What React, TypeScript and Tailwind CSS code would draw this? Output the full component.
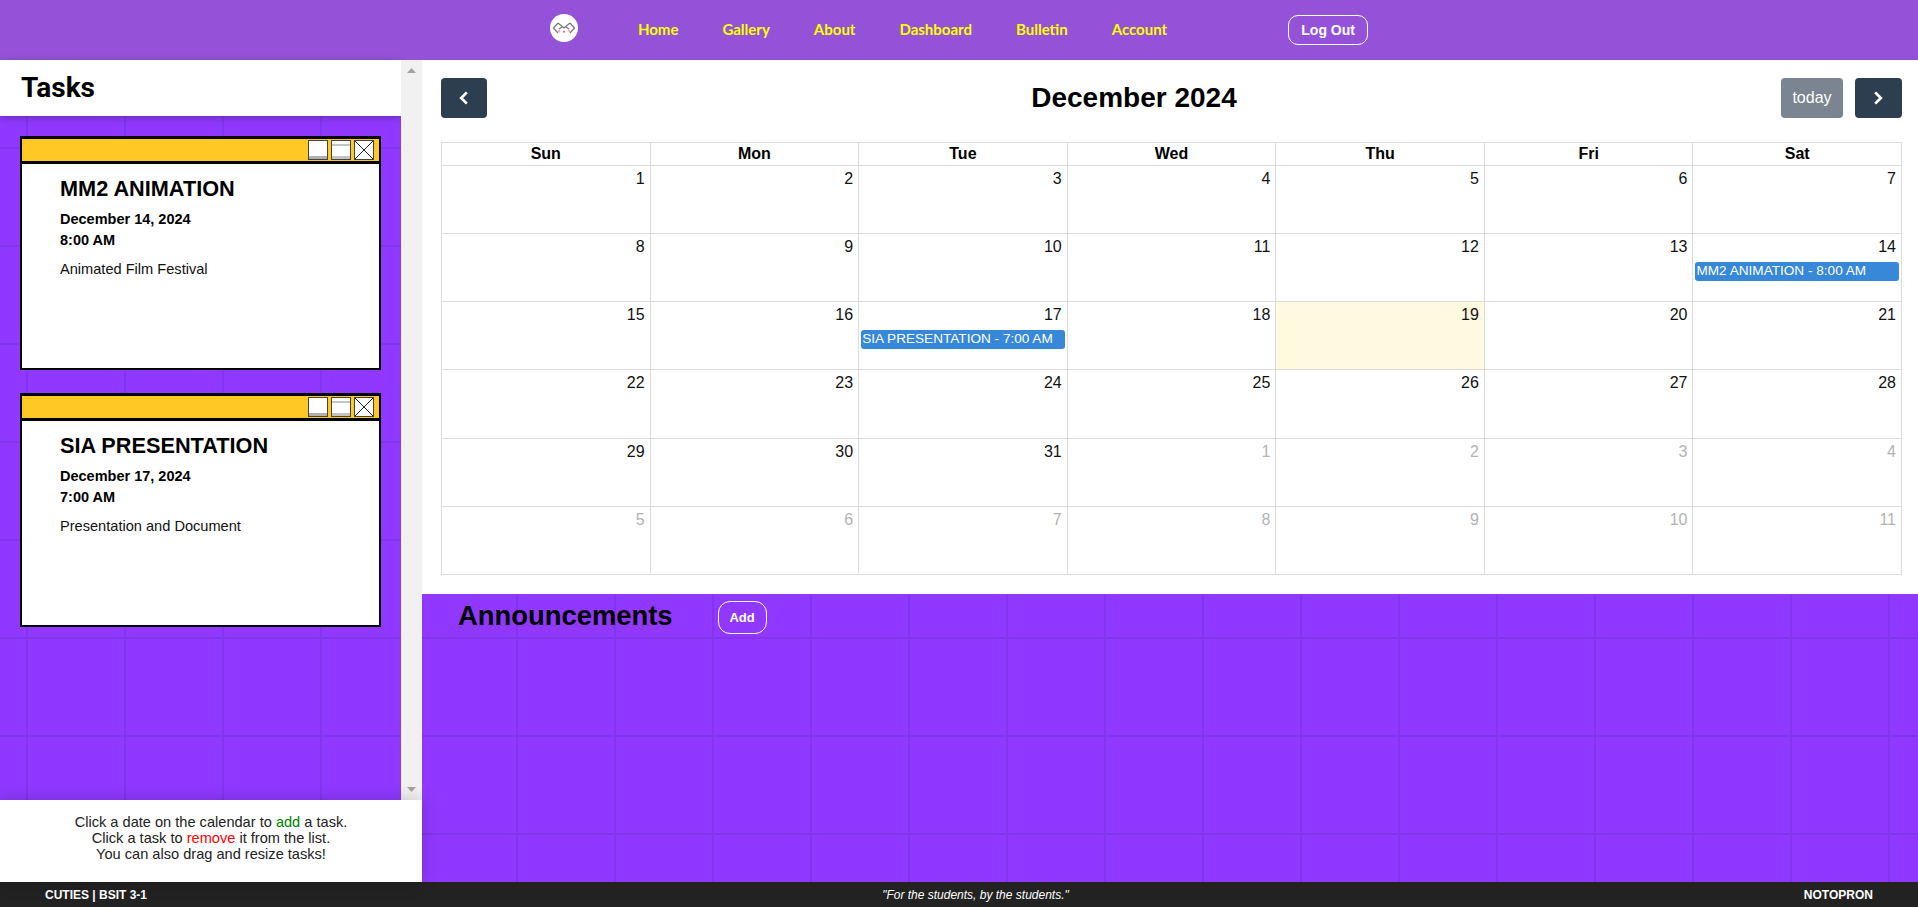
const days = ["Sun", "Mon", "Tue", "Wed", "Thu", "Fri", "Sat"]

// december 2024 grid, trailing days belong to january
const cells = Array.from({ length: 42 }, (_, i) => ({
  label: i < 31 ? i + 1 : i - 30,
  muted: i >= 31,
  today: i === 18,
  event: i === 13 ? "MM2 ANIMATION - 8:00 AM" : i === 16 ? "SIA PRESENTATION - 7:00 AM" : null,
}))

const links = ["Home", "Gallery", "About", "Dashboard", "Bulletin", "Account"]

const tasks = [
  { title: "MM2 ANIMATION", date: "December 14, 2024", time: "8:00 AM", note: "Animated Film Festival" },
  { title: "SIA PRESENTATION", date: "December 17, 2024", time: "7:00 AM", note: "Presentation and Document" },
]

function Logo() {
  return (
    <div className="mb-[4px] flex size-[28px] items-center justify-center rounded-full bg-white">
      <svg width="24" height="16" viewBox="0 0 24 16" fill="none" stroke="#777" strokeWidth="1.2">
        <path d="M6 3 1.5 8 6 13" />
        <path d="M18 3 22.5 8 18 13" />
        <path d="M6 3l6 5 6-5M7 9l3-2M17 9l-3-2" />
        <circle cx="7" cy="11" r="1.4" fill="#f5b5c8" stroke="none" />
        <circle cx="17" cy="11" r="1.4" fill="#f5b5c8" stroke="none" />
        <path d="M11 11h2l-1 2.4z" fill="#c0455e" stroke="none" />
      </svg>
    </div>
  )
}

function TaskCard({ title, date, time, note }: (typeof tasks)[number]) {
  return (
    <div className="h-[234px] border-2 border-t-[3px] border-black bg-white">
      <div className="flex h-[25px] items-center justify-end gap-[3px] border-b-[3px] border-black bg-[#ffc825] pr-[5px]">
        <div className="flex size-[20px] flex-col justify-end border border-[#444] bg-white">
          <div className="h-[3px] bg-[#b0b0b0]" />
        </div>
        <div className="flex size-[20px] flex-col border border-[#444] bg-white pt-[3px]">
          <div className="h-[2px] bg-[#c4c4c4]" />
          <div className="mt-auto h-[3px] bg-[#c4c4c4]" />
        </div>
        <div className="size-[20px] border border-[#444] bg-white">
          <svg width="18" height="18" viewBox="0 0 18 18" stroke="#222" strokeWidth="1" className="block">
            <path d="M0 0l18 18M18 0 0 18" />
          </svg>
        </div>
      </div>
      <div className="pl-[38px] pt-[11px]">
        <h3 className="text-[21.7px] leading-[28px] font-bold text-black">{title}</h3>
        <p className="mt-[6px] text-[14.500px] leading-[21px] font-bold text-black">{date}</p>
        <p className="text-[14.500px] leading-[21px] font-bold text-black">{time}</p>
        <p className="mt-[8px] text-[14.600px] leading-[21px] text-[#111]">{note}</p>
      </div>
    </div>
  )
}

export default function App() {
  return (
    <div className="flex h-screen flex-col overflow-hidden bg-[#9038ff] bg-[linear-gradient(to_right,#8235ea_2px,transparent_2px),linear-gradient(to_bottom,#8235ea_2px,transparent_2px)] bg-[size:98px_98px] bg-[position:26px_49px] font-['Liberation_Sans',sans-serif]">
      <nav className="flex h-[60px] shrink-0 items-center justify-center bg-[#9452d8]">
        <Logo />
        <div className="ml-[60px] mb-[2px] flex items-center gap-[44px]">
          {links.map((link) => (
            <a key={link} className="font-['Lato',sans-serif] text-[15px] font-bold text-[#ffff00]">
              {link}
            </a>
          ))}
        </div>
        <button className="ml-[121px] h-[30px] w-[80px] rounded-[10px] border border-white text-[14px] font-bold text-white">
          Log Out
        </button>
      </nav>

      <div className="flex min-h-0 flex-1">
        <aside className="flex w-[422px] shrink-0 flex-col">
          <div className="flex min-h-0 flex-1">
            <div className="w-[401px]">
              <div className="flex h-[56px] items-center bg-white pl-[21px] shadow-[0_2px_8px_rgba(0,0,0,0.25)]">
                <h2 className="font-['Roboto',sans-serif] text-[28px] font-bold text-black">Tasks</h2>
              </div>
              <div className="flex flex-col gap-[23px] px-[20px] pt-[20px]">
                {tasks.map((task) => (
                  <TaskCard key={task.title} {...task} />
                ))}
              </div>
            </div>
            <div className="flex w-[21px] flex-col items-center justify-between bg-[#f1f1f1] py-[8px]">
              <svg width="9" height="5" viewBox="0 0 9 5" fill="#a3a3a3"><path d="M4.500 0 9 5H0z" /></svg>
              <svg width="9" height="5" viewBox="0 0 9 5" fill="#a3a3a3"><path d="M0 0h9L4.500 5z" /></svg>
            </div>
          </div>
          <div className="relative h-[82px] shrink-0 bg-white pt-[14px] text-center text-[14.600px] leading-[16px] text-[#222] shadow-[0_0_16px_rgba(0,0,0,0.2)]">
            <p>
              Click a date on the calendar to <span className="text-[#008000]">add</span> a task.
            </p>
            <p>
              Click a task to <span className="text-[#ff0000]">remove</span> it from the list.
            </p>
            <p>You can also drag and resize tasks!</p>
          </div>
        </aside>

        <main className="flex min-w-0 flex-1 flex-col">
          <section className="h-[534px] bg-white pl-[19px] pr-[16px] pt-[18px]">
            <div className="flex h-[40px] items-center justify-between">
              <button className="flex h-[40px] w-[46px] items-center justify-center rounded-[4px] bg-[#2c3e50] text-white">
                <svg width="16" height="18" viewBox="0 0 14 16" fill="none" stroke="currentColor" strokeWidth="2.400">
                  <path d="M9.500 3 4.500 8l5 5" />
                </svg>
              </button>
              <h1 className="text-[28px] font-bold text-black">December 2024</h1>
              <div className="flex gap-[12px]">
                <button className="h-[40px] w-[62px] rounded-[4px] bg-[#7a8591] text-[16px] text-white">today</button>
                <button className="flex h-[40px] w-[47px] items-center justify-center rounded-[4px] bg-[#2c3e50] text-white">
                  <svg width="16" height="18" viewBox="0 0 14 16" fill="none" stroke="currentColor" strokeWidth="2.400">
                    <path d="M4.500 3l5 5-5 5" />
                  </svg>
                </button>
              </div>
            </div>

            <div className="mt-[24px] grid h-[433px] grid-cols-7 grid-rows-[23px_repeat(6,1fr)] border-l border-t border-[#ddd]">
              {days.map((day) => (
                <div key={day} className="border-b border-r border-[#ddd] text-center text-[16px] leading-[21px] font-bold text-black">
                  {day}
                </div>
              ))}
              {cells.map((cell, i) => (
                <div key={i} className={`min-w-0 border-b border-r border-[#ddd] px-[2px] ${cell.today ? "bg-[#fff9df]" : ""}`}>
                  <div className={`pr-[3px] pt-[4px] pb-[2px] text-right text-[16px] leading-[18px] ${cell.muted ? "text-[#b3b3b3]" : "text-[#111]"}`}>
                    {cell.label}
                  </div>
                  {cell.event && (
                    <div className="mt-[4px] h-[19px] truncate rounded-[3px] bg-[#3788d8] px-[1px] text-[13.6px] leading-[18px] text-white">
                      {cell.event}
                    </div>
                  )}
                </div>
              ))}
            </div>
          </section>

          <section className="flex items-center pl-[36px] pt-[4px]">
            <h2 className="text-[27.4px] leading-[32px] font-bold text-black">Announcements</h2>
            <button className="ml-[45px] mt-[3px] h-[33px] w-[49px] rounded-[12px] border border-white text-[13px] font-bold text-white">
              Add
            </button>
          </section>
        </main>
      </div>

      <footer className="flex h-[25px] shrink-0 items-center justify-between bg-[#222222] px-[45px] text-[12px] text-white">
        <span className="font-bold">CUTIES | BSIT 3-1</span>
        <span className="italic">"For the students, by the students."</span>
        <span className="font-bold">NOTOPRON</span>
      </footer>
    </div>
  )
}
